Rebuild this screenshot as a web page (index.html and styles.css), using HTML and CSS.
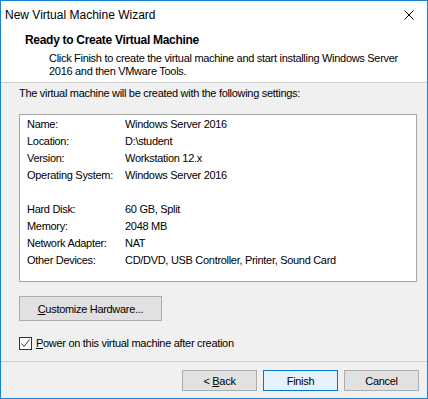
FILE: index.html
```html
<!DOCTYPE html>
<html lang="en">
  <head>
    <meta charset="UTF-8" />
    <title>New Virtual Machine Wizard</title>
    <link rel="stylesheet" href="styles.css">
  </head>
  <body>
    <div class="window">
      <div class="titlebar">
        <span class="title">New Virtual Machine Wizard</span>
        <span class="close">
          <svg width="10" height="10" viewBox="0 0 10 10">
            <path d="M0.5 0.5 L9.5 9.5 M9.5 0.5 L0.5 9.5" stroke="#000" stroke-width="1" fill="none" />
          </svg>
        </span>
      </div>

      <div class="header">
        <h1>Ready to Create Virtual Machine</h1>
        <p>
          Click Finish to create the virtual machine and start installing Windows Server<br />
          2016 and then VMware Tools.
        </p>
      </div>

      <div class="content">
        <div class="intro">The virtual machine will be created with the following settings:</div>

        <div class="settings">
          <div class="row"><span class="label">Name:</span><span>Windows Server 2016</span></div>
          <div class="row"><span class="label">Location:</span><span>D:\student</span></div>
          <div class="row"><span class="label">Version:</span><span>Workstation 12.x</span></div>
          <div class="row"><span class="label">Operating System:</span><span>Windows Server 2016</span></div>
          <div class="row"></div>
          <div class="row"><span class="label">Hard Disk:</span><span>60 GB, Split</span></div>
          <div class="row"><span class="label">Memory:</span><span>2048 MB</span></div>
          <div class="row"><span class="label">Network Adapter:</span><span>NAT</span></div>
          <div class="row"><span class="label">Other Devices:</span><span>CD/DVD, USB Controller, Printer, Sound Card</span></div>
        </div>

        <button class="btn customize"><u>C</u>ustomize Hardware...</button>

        <label class="check">
          <span class="box">
            <svg width="11" height="11" viewBox="0 0 11 11">
              <path d="M1.5 5.5 L4 8.5 L9.5 1.5" stroke="#333" stroke-width="1" fill="none" />
            </svg>
          </span>
          <span><u>P</u>ower on this virtual machine after creation</span>
        </label>
      </div>

      <div class="footer">
        <button class="btn">&lt; <u>B</u>ack</button>
        <button class="btn default">Finish</button>
        <button class="btn">Cancel</button>
      </div>
    </div>
  </body>
</html>
```

FILE: styles.css
```css
body {
  margin: 0;
  font-family: "Liberation Sans", Arial, sans-serif;
  font-size: 11px;
  letter-spacing: -0.3px;
  color: #000;
  background: #fff;
}

.window {
  width: 428px;
  height: 399px;
  box-sizing: border-box;
  border: 1px solid #1883d7;
  display: flex;
  flex-direction: column;
  background: #f0f0f0;
}

.titlebar {
  height: 29px;
  flex-shrink: 0;
  background: #fff;
  display: flex;
  align-items: center;
  justify-content: space-between;
  padding: 0 13px 2px 4px;
  box-sizing: border-box;
}

.title {
  font-size: 12px;
  letter-spacing: 0;
}

.close {
  display: flex;
}

.header {
  height: 53px;
  flex-shrink: 0;
  box-sizing: border-box;
  background: #fff;
  border-bottom: 1px solid #cfcfcf;
  padding: 2px 0 0 24px;
}

.header h1 {
  margin: 0;
  font-size: 12px;
  font-weight: 700;
  line-height: 17px;
}

.header p {
  margin: 3px 0 0 24px;
  line-height: 13px;
  white-space: nowrap;
}

.content {
  flex: 1;
  padding: 2px 10px 0 18px;
}

.intro {
  line-height: 17px;
}

.settings {
  margin-top: 12px;
  height: 168px;
  box-sizing: border-box;
  background: #fff;
  border: 1px solid #a6a6a6;
  padding: 1px 0 0 7px;
}

.row {
  display: flex;
  height: 17px;
  line-height: 17px;
  white-space: nowrap;
}

.label {
  width: 98px;
  flex-shrink: 0;
}

.btn {
  font-family: inherit;
  font-size: 11px;
  letter-spacing: -0.3px;
  color: #000;
  background: #e1e1e1;
  border: 1px solid #adadad;
  width: 75px;
  height: 21px;
  padding: 0;
}

.btn.default {
  background: #e5f1fb;
  border-color: #0078d7;
}

.customize {
  display: block;
  width: 143px;
  height: 25px;
  margin-top: 14px;
}

.check {
  display: flex;
  align-items: center;
  gap: 4px;
  margin-top: 16px;
  line-height: 13px;
}

.box {
  width: 13px;
  height: 13px;
  box-sizing: border-box;
  border: 1px solid #333;
  background: #fff;
  display: flex;
  align-items: center;
  justify-content: center;
}

.footer {
  height: 37px;
  flex-shrink: 0;
  box-sizing: border-box;
  border-top: 1px solid #cfcfcf;
  display: flex;
  justify-content: flex-end;
  gap: 6px;
  padding: 8px 8px 0 0;
}
```
